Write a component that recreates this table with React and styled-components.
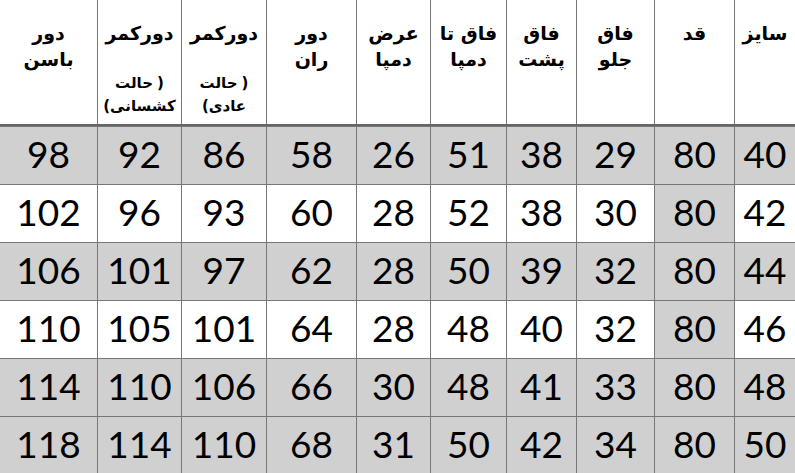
import React from "react";
import styled, { createGlobalStyle } from "styled-components";

const columns = [
  { width: 61, title: ["سایز"] },
  { width: 80, title: ["قد"], shaded: true },
  { width: 78, title: ["فاق", "جلو"] },
  { width: 70, title: ["فاق", "پشت"] },
  { width: 76, title: ["فاق تا", "دمپا"] },
  { width: 74, title: ["عرض", "دمپا"] },
  { width: 90, title: ["دور", "ران"] },
  { width: 85, title: ["دورکمر"], note: "عادی" },
  { width: 84, title: ["دورکمر"], note: "کشسانی" },
  { width: 97, title: ["دور", "باسن"] },
];

const rows = [
  { shaded: true, values: [40, 80, 29, 38, 51, 26, 58, 86, 92, 98] },
  { shaded: false, values: [42, 80, 30, 38, 52, 28, 60, 93, 96, 102] },
  { shaded: true, values: [44, 80, 32, 39, 50, 28, 62, 97, 101, 106] },
  { shaded: false, values: [46, 80, 32, 40, 48, 28, 64, 101, 105, 110] },
  { shaded: true, values: [48, 80, 33, 41, 48, 30, 66, 106, 110, 114] },
  { shaded: true, values: [50, 80, 34, 42, 50, 31, 68, 110, 114, 118] },
];

const template = columns.map((c) => `${c.width}px`).join(" ");

const GlobalStyle = createGlobalStyle`
  html, body {
    margin: 0;
    padding: 0;
    background: #fff;
    overflow: hidden;
  }
`;

const SizeTable = styled.div`
  width: 795px;
  height: 473px;
  overflow: hidden;
  direction: rtl;
  background: #fff;
`;

const Row = styled.div`
  display: grid;
  grid-template-columns: ${template};
  height: ${(p) => (p.$header ? "124px" : "58px")};
  border-bottom: ${(p) => (p.$header ? "2px solid #666" : "none")};
  box-sizing: content-box;

  & + & {
    border-top: ${(p) => (p.$header ? "none" : "1px solid #777")};
    height: ${(p) => (p.$header ? "124px" : "57px")};
  }
`;

const HeadCell = styled.div`
  border-left: 1px solid #777;
  padding-top: 20px;
  text-align: center;
  font-family: "DejaVu Sans", sans-serif;
  font-weight: 700;
  font-size: 19px;
  line-height: 26px;
  color: #000;

  &:last-child {
    border-left: none;
  }
`;

const Note = styled.div`
  margin-top: 26px;
  font-size: 15px;
  line-height: 23px;
`;

const NoteLine = styled.div`
  display: flex;
  direction: ltr;
  justify-content: center;
  gap: ${(p) => (p.$spaced ? "4px" : "0")};
`;

const Cell = styled.div`
  border-left: 1px solid #777;
  background: ${(p) => (p.$shaded ? "#d0d0d0" : "#fff")};
  display: flex;
  align-items: center;
  justify-content: center;
  padding-bottom: 4px;
  box-sizing: border-box;
  font-family: Lato, "Open Sans", sans-serif;
  font-size: 37px;
  color: #000;
  direction: ltr;

  &:last-child {
    border-left: none;
  }
`;

export default function App() {
  return (
    <>
      <GlobalStyle />
      <SizeTable>
        <Row $header>
          {columns.map((col, i) => (
            <HeadCell key={i}>
              {col.title.map((line) => (
                <div key={line}>{line}</div>
              ))}
              {col.note && (
                <Note>
                  <NoteLine $spaced>
                    <span>حالت</span>
                    <span>)</span>
                  </NoteLine>
                  <NoteLine>
                    <span>(</span>
                    <span>{col.note}</span>
                  </NoteLine>
                </Note>
              )}
            </HeadCell>
          ))}
        </Row>
        {rows.map((row, r) => (
          <Row key={r}>
            {row.values.map((v, i) => (
              <Cell key={i} $shaded={row.shaded || columns[i].shaded}>
                {v}
              </Cell>
            ))}
          </Row>
        ))}
      </SizeTable>
    </>
  );
}
